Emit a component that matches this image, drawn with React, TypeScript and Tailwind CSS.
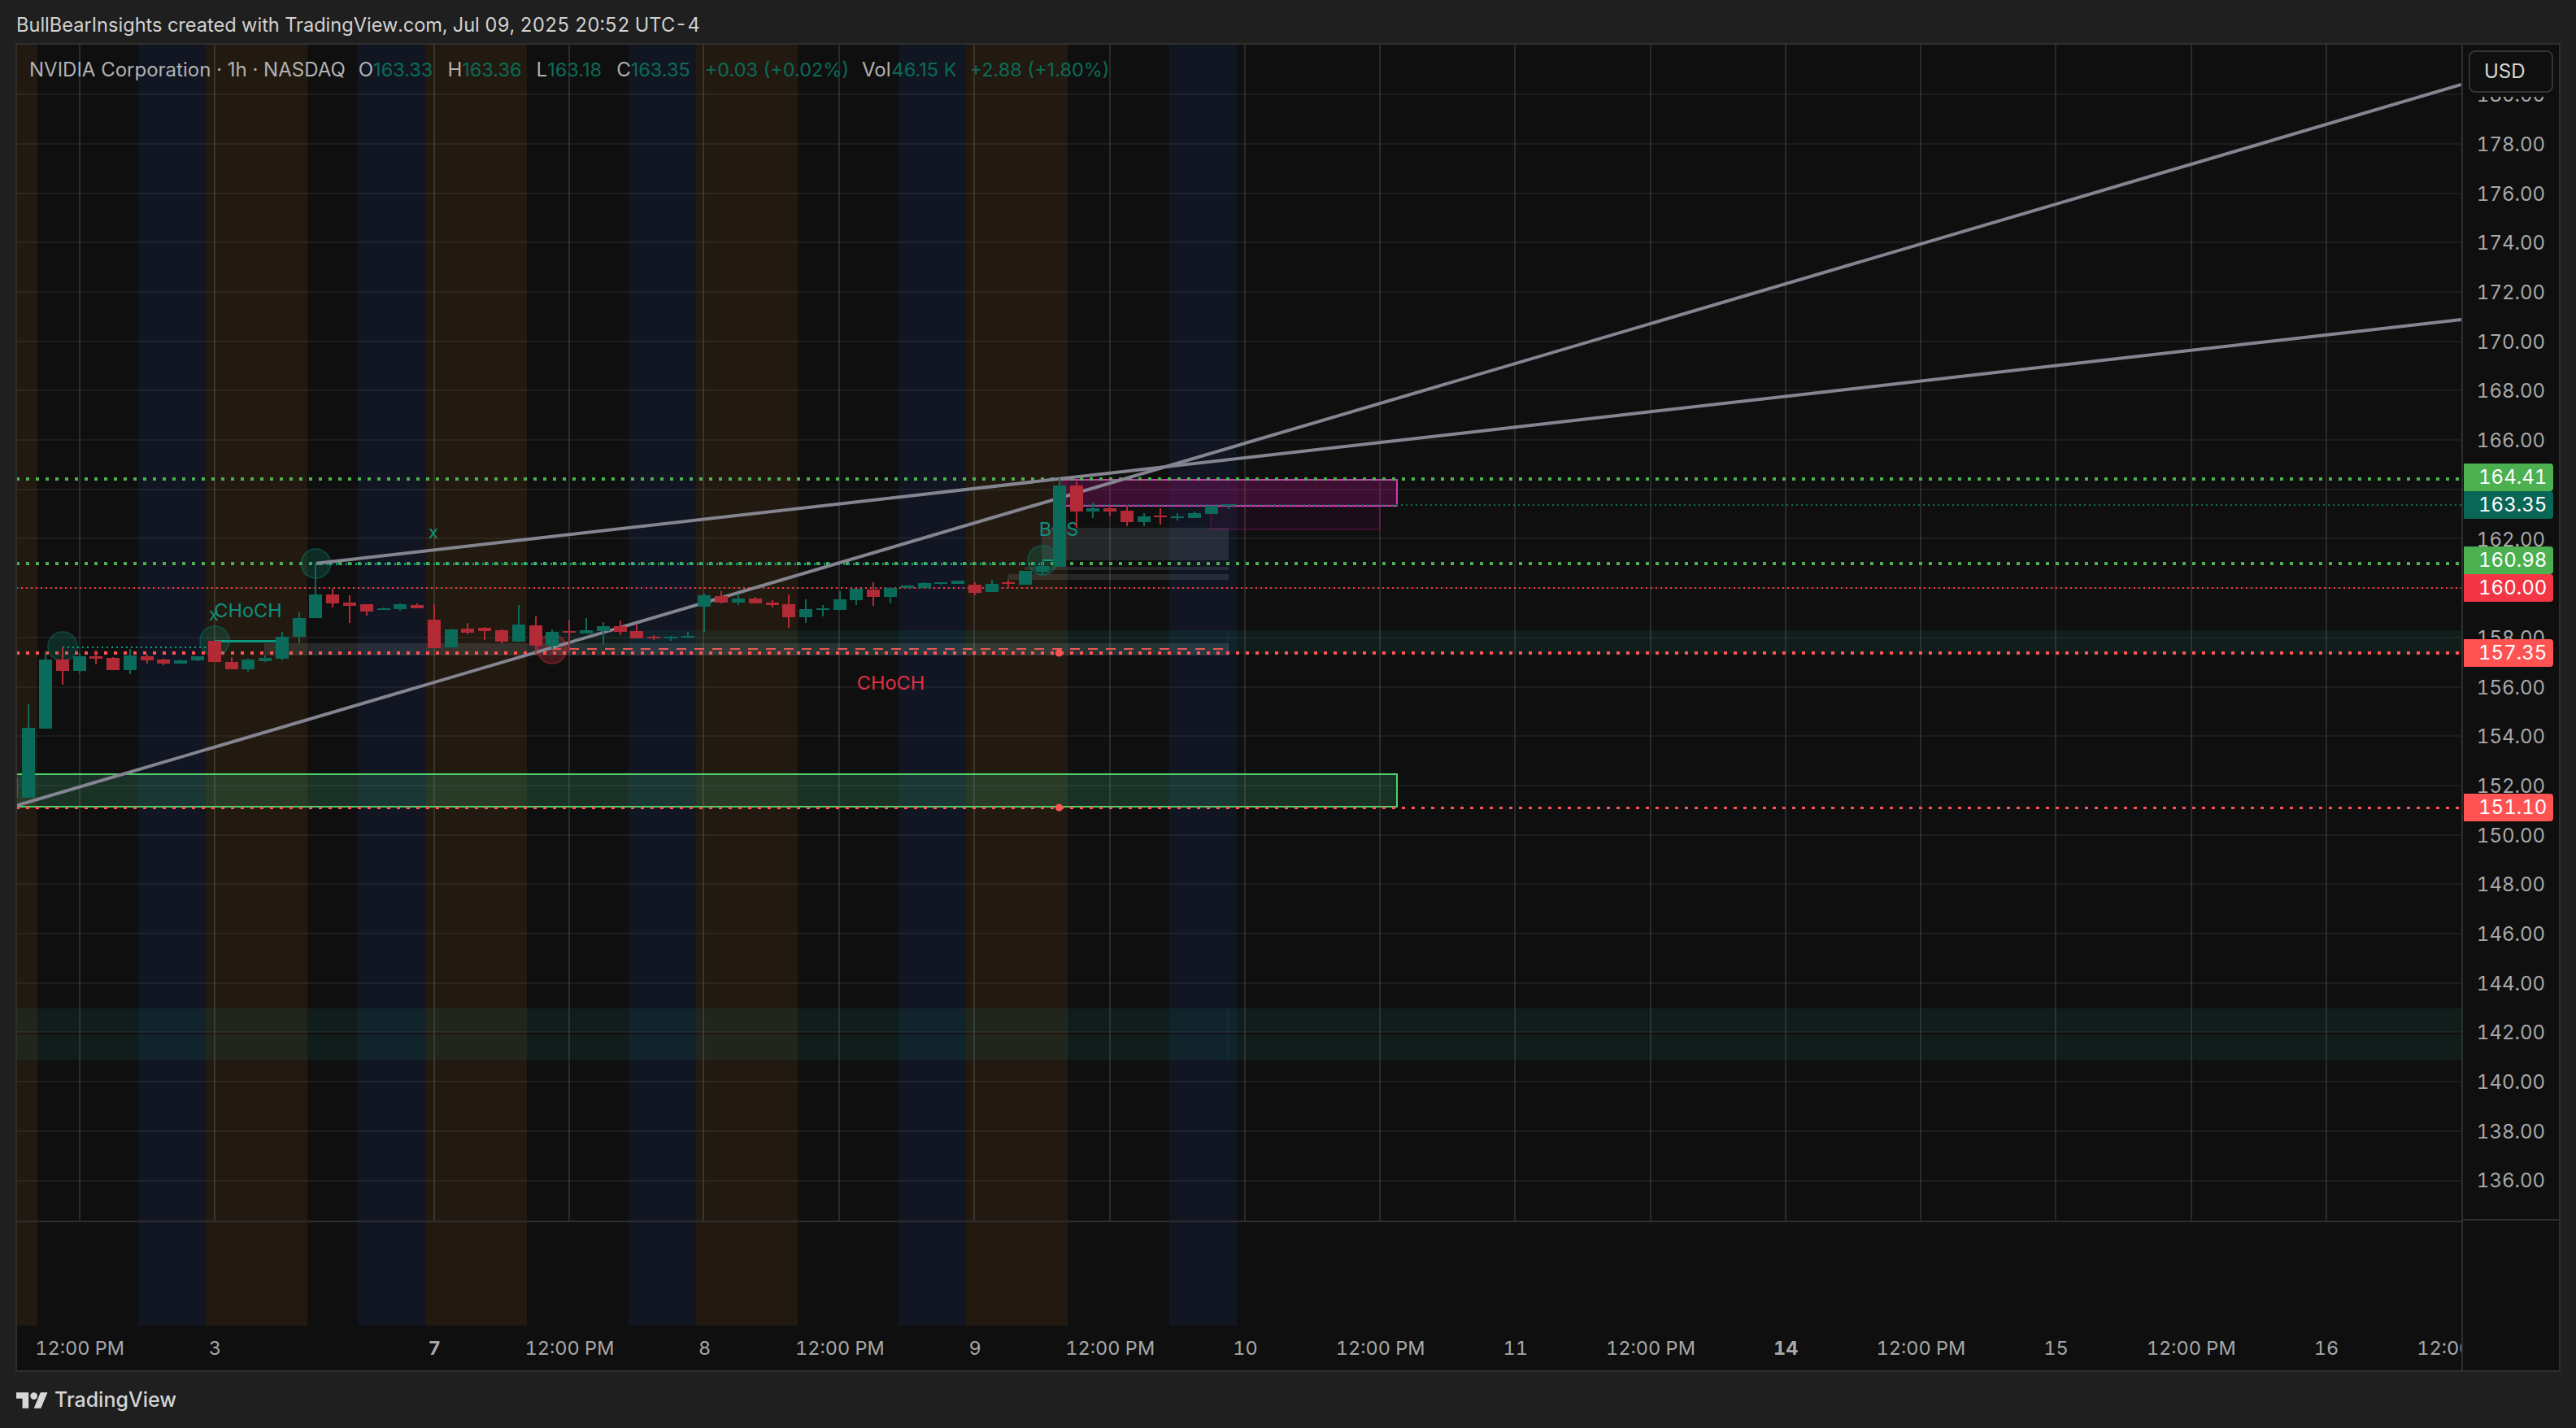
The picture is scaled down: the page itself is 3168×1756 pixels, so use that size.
import React from "react";

const FONT = "font-['Inter','Liberation_Sans',sans-serif]";

const GREEN = "#0a6b5a";
const RED = "#b32a37";
const TEAL = "#089981";

const y = (p: number) => 541 + (166 - p) * 30.35;
const zy = (v: number) => 640 + v / 3;

// [green?, high, top, bottom, low] in zoom units (640 + v / 3)
type Bar = [number, number, number, number, number];
const zoomBars: Bar[] = [
  [1, 678, 765, 1023, 1023], [1, 484, 513, 768, 768], [0, 467, 513, 555, 606], [1, 490, 501, 555, 564],
  [0, 480, 501, 511, 531], [0, 505, 507, 552, 552], [1, 473, 498, 552, 567], [0, 495, 501, 516, 528],
  [0, 510, 513, 528, 534], [1, 513, 516, 528, 528], [1, 500, 501, 516, 519], [0, 443, 444, 522, 522],
  [0, 504, 522, 549, 549], [1, 510, 513, 549, 558], [1, 498, 507, 519, 522], [1, 411, 429, 510, 516],
  [1, 339, 360, 429, 453], [1, 155, 273, 360, 360], [0, 252, 273, 306, 321], [0, 276, 303, 315, 378],
  [0, 309, 309, 336, 351], [1, 321, 324, 330, 330], [1, 306, 309, 327, 333], [0, 306, 312, 324, 324],
  [0, 309, 366, 471, 471], [1, 399, 402, 468, 471], [0, 378, 399, 414, 420], [0, 393, 396, 408, 441],
  [0, 402, 405, 447, 453], [1, 312, 384, 447, 450], [0, 354, 387, 462, 492], [1, 402, 411, 462, 474],
  [0, 366, 408, 414, 489], [1, 360, 405, 417, 417], [1, 375, 390, 408, 456], [0, 369, 390, 411, 423],
  [0, 381, 408, 435, 435], [0, 424, 429, 435, 441], [1, 426, 429, 435, 444], [1, 411, 426, 432, 432],
  [1, 270, 276, 318, 411], [0, 261, 279, 303, 306], [1, 270, 288, 303, 312], [0, 282, 288, 306, 306],
  [0, 294, 303, 312, 321], [0, 273, 309, 357, 396], [1, 291, 327, 357, 378], [1, 312, 324, 330, 354],
  [1, 261, 291, 330, 330], [1, 251, 252, 294, 312], [0, 228, 255, 282, 315], [1, 246, 249, 282, 306],
  [1, 240, 240, 250, 250], [1, 228, 231, 249, 249], [1, 228, 228, 234, 237], [1, 222, 222, 234, 234],
  [0, 228, 237, 267, 276], [1, 219, 234, 264, 264], [0, 219, 228, 234, 249], [1, 186, 186, 237, 237],
  [1, 150, 168, 189, 201],
];
// same order, continuing from bar 61, already in page pixels
const pixelBars: Bar[] = [
  [1, 588, 597, 697, 697], [0, 592, 597, 629, 649], [1, 618, 625, 629, 637], [0, 622, 625, 629, 635],
  [0, 621, 628, 642, 647], [1, 631, 635, 642, 647], [0, 625, 634, 636, 645], [1, 631, 635, 637, 640],
  [1, 629, 631, 637, 637], [1, 620, 622, 632, 632], [1, 620, 620, 622, 626],
];
const bars: { x: number; up: boolean; h: number; t: number; b: number; l: number }[] = [
  { x: 14.4, up: false, h: 954, t: 957, b: 981, l: 981 },
  ...zoomBars.map((d, i) => ({ x: 35.2 + i * 20.78, up: !!d[0], h: zy(d[1]), t: zy(d[2]), b: zy(d[3]), l: zy(d[4]) })),
  ...pixelBars.map((d, i) => ({ x: 35.2 + (i + 61) * 20.78, up: !!d[0], h: d[1], t: d[2], b: d[3], l: d[4] })),
];

const amber: [number, number][] = [[20, 46], [253, 378], [524, 648], [856, 981], [1188, 1313]];
const blue: [number, number][] = [[170, 253], [440, 524], [773, 856], [1105, 1188], [1438, 1521]];
const verticals = [98, 264, 534, 700, 865, 1031.5, 1198, 1365, 1531, 1697, 1863, 2030, 2196, 2362, 2528, 2695, 2861];
const grid = Array.from({ length: 23 }, (_, i) => 180 - i * 2);
const prices = Array.from({ length: 23 }, (_, i) => (180 - i * 2).toFixed(2));

const times: { t: string; bold?: boolean; gap?: boolean }[] = [
  { t: "12:00 PM" }, { t: "3" }, { t: "7", bold: true, gap: true }, { t: "12:00 PM" }, { t: "8" }, { t: "12:00 PM" },
  { t: "9" }, { t: "12:00 PM" }, { t: "10" }, { t: "12:00 PM" }, { t: "11" }, { t: "12:00 PM" },
  { t: "14", bold: true }, { t: "12:00 PM" }, { t: "15" }, { t: "12:00 PM" }, { t: "16" }, { t: "12:00 PM" },
];

function Chart() {
  return (
    <svg className="block" width={3006} height={1575} viewBox="21 55 3006 1575">
      {amber.map(([a, b]) => <rect key={a} x={a} y={55} width={b - a} height={1575} fill="#221a10" />)}
      {blue.map(([a, b]) => <rect key={a} x={a} y={55} width={b - a} height={1575} fill="#111622" />)}

      <g shapeRendering="crispEdges">
        {grid.map((p) => <line key={p} x1={20} x2={3027} y1={Math.round(y(p))} y2={Math.round(y(p))} stroke="#fff" strokeOpacity={0.055} strokeWidth={2} />)}
        {verticals.map((v) => <line key={v} x1={v} x2={v} y1={55} y2={1502} stroke="#fff" strokeOpacity={0.115} strokeWidth={2} />)}
        <line x1={20} x2={3027} y1={1502} y2={1502} stroke="#2e2e2e" strokeWidth={2} />

        {/* teal bands */}
        <rect x={20} y={1240} width={1491} height={29} fill="rgba(20,120,110,.13)" />
        <rect x={20} y={1272} width={1491} height={32} fill="rgba(20,120,110,.13)" />
        <rect x={1509} y={1240} width={1518} height={29} fill="rgba(20,120,110,.13)" />
        <rect x={1509} y={1272} width={1518} height={32} fill="rgba(20,120,110,.13)" />
        <rect x={679} y={775} width={832} height={30} fill="rgba(20,120,110,.13)" />
        <rect x={1509} y={775} width={1518} height={29} fill="rgba(20,120,110,.13)" />

        {/* grey zones */}
        <rect x={325} y={791} width={1186} height={15} fill="rgba(160,175,185,.16)" />
        <rect x={1281} y={649} width={230} height={40} fill="rgba(160,175,185,.15)" />
        <rect x={1260} y={697} width={251} height={4} fill="rgba(160,175,185,.15)" />
        <rect x={1239} y={706} width={272} height={7} fill="rgba(160,175,185,.15)" />

        {/* green demand box */}
        <rect x={20} y={952} width={1698} height={40} fill="rgba(70,190,130,.2)" stroke="#4fd068" strokeWidth={2} />

        {/* pink boxes */}
        <rect x={1489} y={623} width={208} height={28} fill="rgba(200,15,150,.07)" stroke="rgba(200,15,150,.22)" strokeWidth={2} />
        <rect x={1303} y={590} width={415} height={32} fill="rgba(200,15,150,.25)" stroke="#c93fb0" strokeWidth={2} />

        {/* levels */}
        <line x1={20} x2={3027} y1={589} y2={589} stroke="#4caf50" strokeWidth={4} strokeDasharray="4 8" />
        <line x1={1303} x2={3027} y1={621} y2={621} stroke="#0a6b5a" strokeWidth={2} strokeDasharray="2 4" />
        <line x1={20} x2={3027} y1={693} y2={693} stroke="#4caf50" strokeWidth={4} strokeDasharray="4 8" />
        <line x1={389} x2={1282} y1={693} y2={693} stroke={TEAL} strokeWidth={3} strokeDasharray="2 4" />
        <line x1={20} x2={3027} y1={723} y2={723} stroke="#f23645" strokeWidth={2} strokeDasharray="2 4" />
        <line x1={20} x2={3027} y1={803} y2={803} stroke="#ff5252" strokeWidth={4} strokeDasharray="4 8" />
        <line x1={678} x2={1511} y1={798} y2={798} stroke="#e85757" strokeWidth={2} strokeDasharray="12 10" />
        <line x1={20} x2={3027} y1={993.5} y2={993.5} stroke="#ff5252" strokeWidth={3} strokeDasharray="4 8" />
        <line x1={77} x2={264} y1={796} y2={796} stroke={TEAL} strokeWidth={2} strokeDasharray="2 4" />
        <line x1={264} x2={340} y1={788} y2={788} stroke={TEAL} strokeWidth={3} />
        <line x1={1282} x2={1296} y1={689} y2={689} stroke={TEAL} strokeWidth={2} />
      </g>

      <circle cx={1302.5} cy={803} r={4.5} fill="#ff5252" />
      <circle cx={1302.5} cy={993} r={4.5} fill="#ff5252" />

      {/* swing circles */}
      {[[77, 795], [264, 788], [388.5, 693], [1282, 689]].map(([cx, cy]) => (
        <circle key={cx} cx={cx} cy={cy} r={18} fill={TEAL} fillOpacity={0.2} stroke={TEAL} strokeOpacity={0.3} strokeWidth={2} />
      ))}
      <circle cx={679} cy={798} r={18} fill="#f23645" fillOpacity={0.25} stroke="#f23645" strokeOpacity={0.3} strokeWidth={2} />

      {/* trend lines */}
      <line x1={20} y1={990.6} x2={3027} y2={104} stroke="#858592" strokeWidth={4} />
      <line x1={389} y1={692.7} x2={3027} y2={393} stroke="#858592" strokeWidth={4} />

      {/* chart labels */}
      <g fontFamily="Inter, 'Liberation Sans', sans-serif" fontSize={23.5}>
        <text x={305} y={750} textAnchor="middle" dominantBaseline="central" fill="#0f8f7d">CHoCH</text>
        <text x={1095.5} y={839} textAnchor="middle" dominantBaseline="central" fill="#e02f3f">CHoCH</text>
        <text x={1302} y={650} textAnchor="middle" dominantBaseline="central" fill="#0f8f7d">BOS</text>
        <text x={263} y={755} textAnchor="middle" dominantBaseline="central" fill="#0f8f7d" fontSize={22}>x</text>
        <text x={533} y={654} textAnchor="middle" dominantBaseline="central" fill="#0f8f7d" fontSize={22}>x</text>
      </g>

      {/* candles */}
      <g shapeRendering="crispEdges">
        {bars.map((c) => {
          const col = c.up ? GREEN : RED;
          return (
            <g key={c.x}>
              <line x1={c.x} x2={c.x} y1={c.h} y2={c.l} stroke={col} strokeWidth={2} />
              <rect x={c.x - 8} y={c.t} width={16} height={c.b - c.t} fill={col} />
            </g>
          );
        })}
      </g>
    </svg>
  );
}

function Legend() {
  const V = "text-[#0b6b58] text-[23.5px]";
  return (
    <div className="absolute left-[15px] top-[17px] flex items-center text-[24px] leading-[28px] whitespace-nowrap text-[#b2b2b2]">
      <span>NVIDIA Corporation · 1h · NASDAQ</span>
      <span className="ml-[16px]">O</span><span className={V}>163.33</span>
      <span className="ml-[18px]">H</span><span className={V}>163.36</span>
      <span className="ml-[18px]">L</span><span className={V}>163.18</span>
      <span className="ml-[18px]">C</span><span className={V}>163.35</span>
      <span className={`ml-[18px] ${V}`}>+0.03 (+0.02%)</span>
      <span className="ml-[16px]">Vol</span><span className={`ml-[1px] ${V}`}>46.15 K</span>
      <span className={`ml-[16px] ${V}`}>+2.88 (+1.80%)</span>
    </div>
  );
}

function Pill({ text, top, bg }: { text: string; top: string; bg: string }) {
  return (
    <div className={`absolute left-[1px] w-[110px] h-[34px] rounded-r-[4px] flex items-center pl-[18px] text-[24px] text-white tabular-nums ${top} ${bg}`}>
      {text}
    </div>
  );
}

function PriceAxis() {
  return (
    <div className="relative w-[120px] flex-none flex flex-col border-l-2 border-[#2e2e2e] bg-[#0f0f0f]">
      <div className="h-[1446px] flex-none overflow-hidden border-b-2 border-[#2e2e2e] pt-[32px]">
        {prices.map((p) => (
          <div key={p} className="h-[60.7px] flex items-center justify-center text-[24px] text-[#a8a8a8] tabular-nums">{p}</div>
        ))}
      </div>
      <div className="absolute left-[7px] top-[7px] w-[104px] h-[52px] rounded-[8px] border-2 border-[#333333] bg-[#0f0f0f] shadow-[0_5px_0_#0f0f0f] flex items-center pl-[17px] text-[24px] text-[#d8d8d8]">USD</div>
      <Pill text="164.41" top="top-[515px]" bg="bg-[#4caf50]" />
      <Pill text="163.35" top="top-[549px]" bg="bg-[#0a6656]" />
      <Pill text="160.98" top="top-[617px]" bg="bg-[#4caf50]" />
      <Pill text="160.00" top="top-[651px]" bg="bg-[#f23645]" />
      <Pill text="157.35" top="top-[731px]" bg="bg-[#ff5252]" />
      <Pill text="151.10" top="top-[921px]" bg="bg-[#ff5252]" />
    </div>
  );
}

function TimeAxis() {
  return (
    <div className="h-[55px] flex-none flex items-center overflow-hidden bg-[#0f0f0f] pl-0">
      <div className="flex flex-none ml-[-6px]">
        {times.map((t, i) => (
          <div
            key={i}
            className={`w-[166.2px] flex-none text-center text-[23.5px] text-[#a8a8a8] tabular-nums ${t.gap ? "ml-[103.8px]" : ""} ${t.bold ? "font-bold" : ""}`}
          >
            {t.t}
          </div>
        ))}
      </div>
    </div>
  );
}

export default function App() {
  return (
    <div className={`w-[3168px] h-[1756px] overflow-hidden flex flex-col bg-[#1f1f1f] ${FONT}`}>
      <div className="h-[53px] flex-none flex items-center pl-[20px] pt-[8px] text-[23.6px] text-[#d1d1d1] whitespace-nowrap tabular-nums">
        BullBearInsights created with TradingView.com, Jul 09, 2025 20:52 UTC-4
      </div>
      <div className="ml-[19px] w-[3130px] h-[1634px] flex-none flex border-2 border-[#2e2e2e]">
        <div className="w-[3006px] flex-none flex flex-col bg-[#0f0f0f]">
          <div className="relative h-[1575px] flex-none overflow-hidden">
            <Chart />
            <Legend />
          </div>
          <TimeAxis />
        </div>
        <PriceAxis />
      </div>
      <div className="flex-1 flex items-center pl-[20px] pt-[1px] gap-[8px]">
        <svg width="39" height="20" viewBox="0 4 36 18" fill="#d8d8d8">
          <path d="M14 22H7V11H0V4h14v18zM28 22h-8l7.5-18h8L28 22z" />
          <circle cx="20" cy="8" r="4" />
        </svg>
        <span className="text-[25px] font-medium text-[#d4d4d4]">TradingView</span>
      </div>
    </div>
  );
}
